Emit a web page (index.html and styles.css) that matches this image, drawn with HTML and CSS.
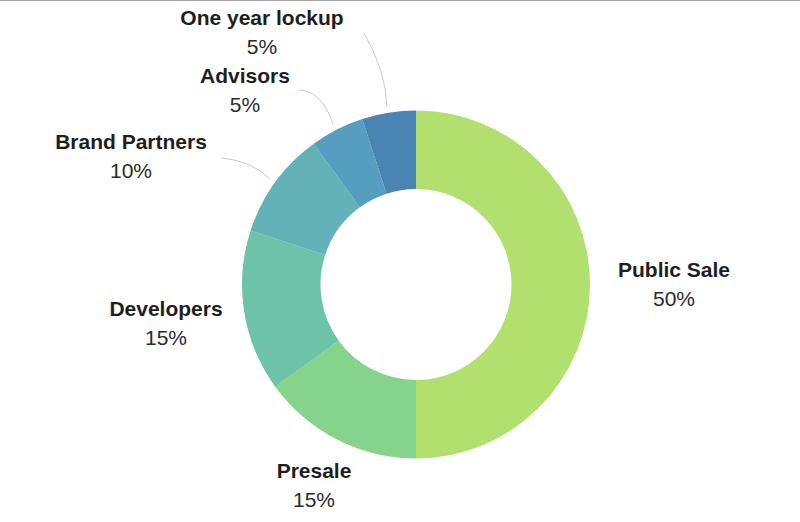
FILE: index.html
```html
<!DOCTYPE html>
<html>
<head>
<meta charset="utf-8">
<link rel="stylesheet" href="styles.css">
</head>
<body>
<div class="chart">
  <svg class="donut" width="800" height="521" viewBox="0 0 800 521">
    <g class="slices">
      <path fill="#b1e06e" d="M416 109.5 A174 174 0 0 1 416 457.5 L416 379 A95.5 95.5 0 0 0 416 188 Z"/>
      <path fill="#86d38c" d="M416 457.5 A174 174 0 0 1 275.23 385.77 L338.74 339.63 A95.5 95.5 0 0 0 416 379 Z"/>
      <path fill="#6cc3a7" d="M275.23 385.77 A174 174 0 0 1 250.52 229.73 L325.17 253.99 A95.5 95.5 0 0 0 338.74 339.63 Z"/>
      <path fill="#62b2b8" d="M250.52 229.73 A174 174 0 0 1 313.73 142.73 L359.87 206.24 A95.5 95.5 0 0 0 325.17 253.99 Z"/>
      <path fill="#569ec0" d="M313.73 142.73 A174 174 0 0 1 362.23 118.02 L386.49 192.67 A95.5 95.5 0 0 0 359.87 206.24 Z"/>
      <path fill="#4a84b2" d="M362.23 118.02 A174 174 0 0 1 416 109.5 L416 188 A95.5 95.5 0 0 0 386.49 192.67 Z"/>
    </g>
    <g class="leaders">
      <path d="M364 32 Q386 70 387 106"/>
      <path d="M299 89 Q322 90 333 123"/>
      <path d="M222 157 Q252 160 270 178"/>
    </g>
  </svg>
  <div class="label" style="left:162px;top:2px"><b>One year lockup</b><span>5%</span></div>
  <div class="label" style="left:145px;top:60px"><b>Advisors</b><span>5%</span></div>
  <div class="label" style="left:31px;top:126px"><b>Brand Partners</b><span>10%</span></div>
  <div class="label" style="left:66px;top:293px"><b>Developers</b><span>15%</span></div>
  <div class="label" style="left:214px;top:455px"><b>Presale</b><span>15%</span></div>
  <div class="label" style="left:574px;top:254px"><b>Public Sale</b><span>50%</span></div>
</div>
</body>
</html>
```
FILE: styles.css
```css
html, body {
  margin: 0;
  padding: 0;
  background: #ffffff;
}
body {
  width: 800px;
  height: 522px;
  border-top: 1px solid #a3a3a3;
  box-sizing: border-box;
  overflow: hidden;
  font-family: "Liberation Sans", Arial, sans-serif;
  color: #222222;
}
.chart {
  position: relative;
  width: 800px;
  height: 521px;
}
.donut {
  display: block;
}
.leaders path {
  fill: none;
  stroke: #c9c9c9;
  stroke-width: 1;
}
.label {
  position: absolute;
  width: 200px;
  display: flex;
  flex-direction: column;
  align-items: center;
  font-size: 21px;
  line-height: 29px;
  white-space: nowrap;
}
.label b {
  font-weight: bold;
  color: #1e1e1e;
}
.label span {
  font-weight: normal;
  color: #2a2a2a;
}
```
